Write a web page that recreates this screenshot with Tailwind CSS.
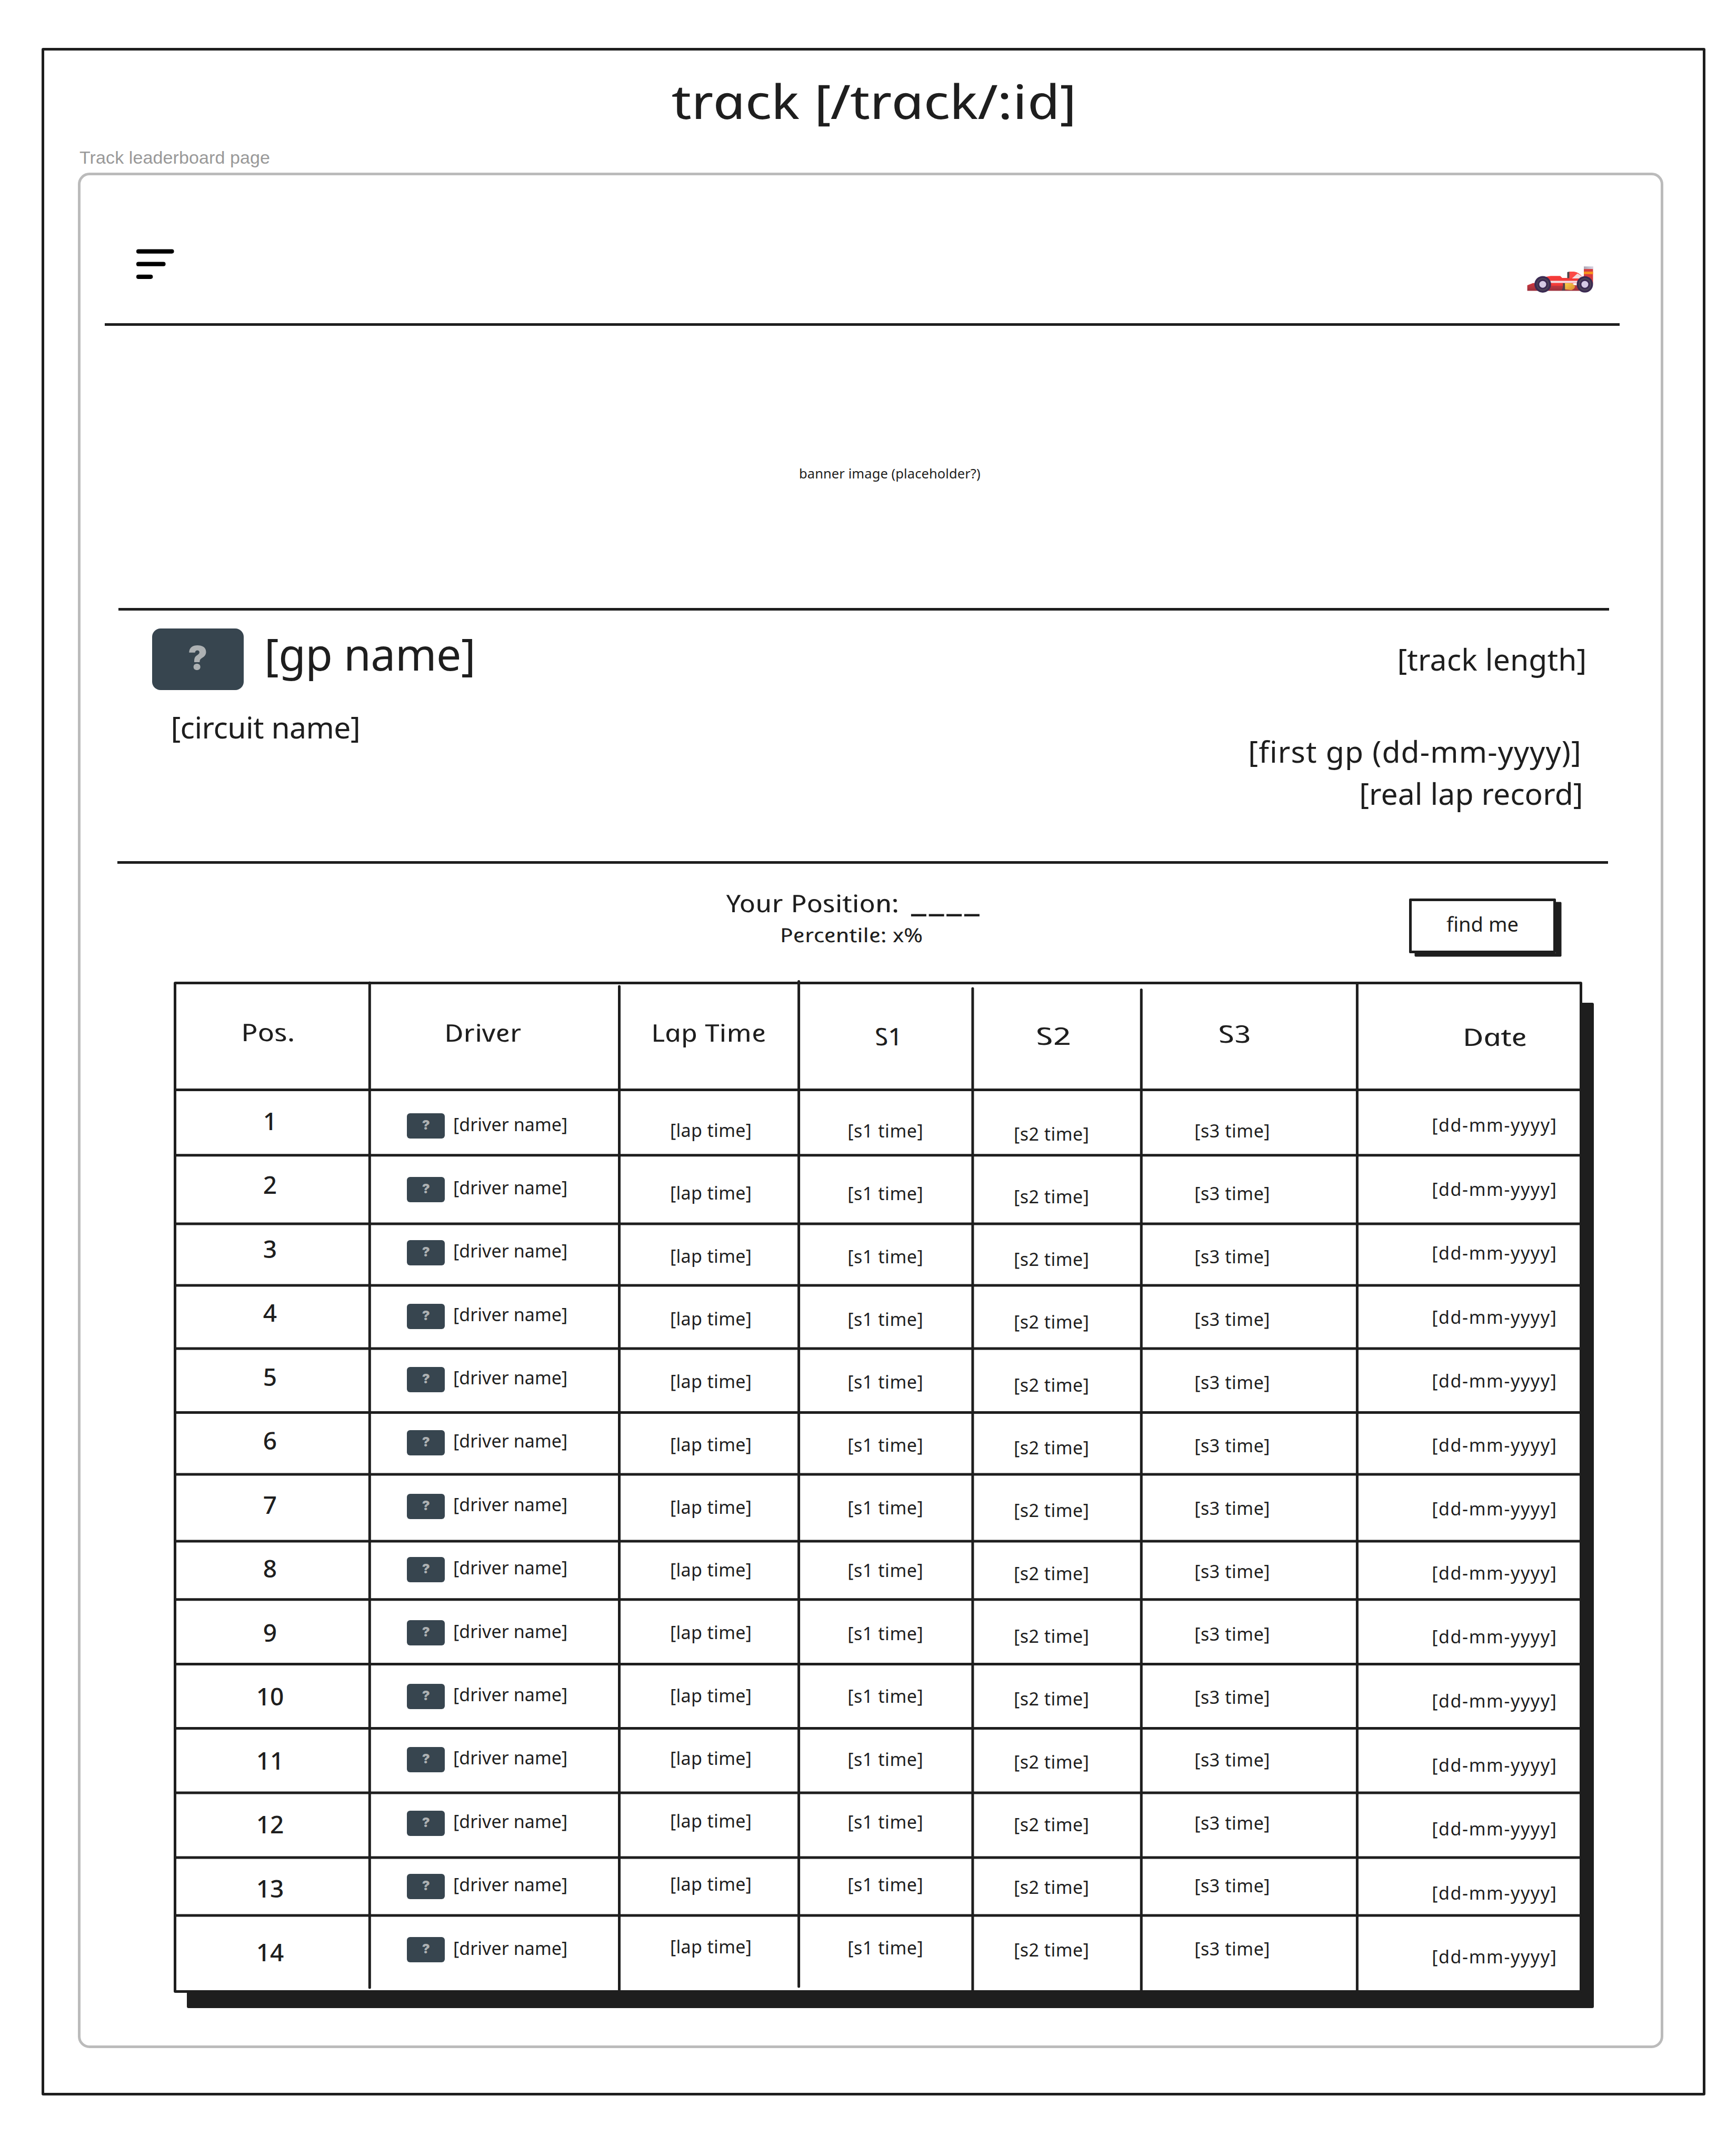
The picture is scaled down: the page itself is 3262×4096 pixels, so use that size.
<!DOCTYPE html>
<html lang="en">
<head>
<meta charset="utf-8">
<title>Track leaderboard page</title>
<script src="https://cdn.jsdelivr.net/npm/@tailwindcss/browser@4"></script>
</head>
<body class="w-[3262px] h-[4096px] overflow-hidden bg-white text-[#1e1e1e] font-['Noto_Sans',sans-serif]">
<div class="flow-root">
<main class="ml-[79px] mt-[91px] w-[3161px] h-[3890px] border-5 border-[#1e1e1e] rounded-[3px] flow-root">

  <h1 data-w="762" data-face="hand" data-size="90" class="mt-[51.7px] ml-[1201px] text-[90px] leading-[86px] whitespace-nowrap italic font-normal skew-x-[12deg] origin-[0_88.75%]">track [/track/:id]</h1>
  <p data-w="361" data-face="label" data-size="34" class="mt-[48.4px] ml-[67px] text-[34px] leading-none whitespace-nowrap text-[#999] font-['Liberation_Sans',sans-serif]">Track leaderboard page</p>

  <section class="mt-[11.9px] ml-[64px] w-[3012px] h-[3563px] border-5 border-[#bbb] rounded-[22px]">

    <!-- Top bar -->
    <header class="ml-[46px] w-[2878px] h-[286.5px] border-b-5 border-[#1e1e1e] flex justify-between items-start pl-[60px] pr-[50px]">
      <svg class="mt-[140px] w-[72px] h-[58px]" viewBox="0 0 72 58" stroke="#000" stroke-width="8.2" stroke-linecap="round"><path d="M4 4.6H67.5M4 28.7H51.5M4 52.8H27.3"/></svg>
      <svg class="mt-[173px] w-[126px] h-[51.5px]" viewBox="0 0 463 188">
        <defs>
          <linearGradient id="nose" x1="0" y1="0" x2="0" y2="1"><stop offset="0" stop-color="#d13a40"/><stop offset="1" stop-color="#9b2f3c"/></linearGradient>
          <linearGradient id="gold" x1="0" y1="0" x2="1" y2="1"><stop offset="0" stop-color="#f9d34a"/><stop offset="1" stop-color="#d9852f"/></linearGradient>
          <linearGradient id="wing" x1="0" y1="0" x2="1" y2="0"><stop offset="0" stop-color="#aca6b4"/><stop offset="1" stop-color="#d8d2e2"/></linearGradient>
        </defs>
        <path d="M397 0H463V18H397Z" fill="url(#wing)"/>
        <path d="M397 18H461V120H397Z" fill="#d63c3f"/>
        <path d="M397 36H461V54H397Z" fill="#f7931e"/>
        <path d="M2 170V132L42 116H150L380 134V170Z" fill="url(#nose)"/>
        <path d="M100 78L165 66H232L246 80H400V117H330L250 134H130Z" fill="#f43b39"/>
        <path d="M160 100H360V115H160Z" fill="#f3dfe3"/>
        <path d="M281 40L297 36V82H281Z" fill="#4b4448"/>
        <path d="M296 36H328Q362 40 386 72L372 84H296Z" fill="#fb4a47"/>
        <path d="M352 50Q370 56 388 74L370 84H314Z" fill="#f3dcdf"/>
        <path d="M250 117H266V168H242Q256 140 250 117Z" fill="#51414c"/>
        <path d="M265 117H312Q326 124 336 140Q332 158 310 166L266 160Z" fill="url(#gold)"/>
        <circle cx="110" cy="125" r="58" fill="#3b2a52"/><circle cx="110" cy="125" r="40" fill="none" stroke="#4d4658" stroke-width="8"/><circle cx="110" cy="125" r="24" fill="#d4c9e4"/>
        <circle cx="404" cy="125" r="57" fill="#3b2a52"/><circle cx="404" cy="125" r="40" fill="none" stroke="#4d4658" stroke-width="8"/><circle cx="404" cy="125" r="24" fill="#d4c9e4"/>
      </svg>
    </header>

    <!-- Banner -->
    <div class="ml-[72px] w-[2832px] h-[540.5px] border-b-5 border-[#1e1e1e] flow-root">
      <p data-w="342" data-face="body" data-size="25.5" class="mt-[267px] ml-[1295px] text-[25.5px] leading-[26px] whitespace-nowrap">banner image (placeholder?)</p>
    </div>

    <!-- Track details -->
    <div class="ml-[70px] w-[2832px] h-[480.7px] border-b-5 border-[#1e1e1e] flex justify-between items-start pl-[65.6px] pr-[44.4px]">
      <div>
        <div class="mt-[34px] flex items-start gap-[45.4px]">
          <div class="w-[174px] h-[117px] rounded-[16px] bg-[#37454f] flex items-center justify-center pb-[5px]"><span class="text-[62px] leading-none font-black text-[#adb1b3] font-['Inter',sans-serif]">?</span></div>
          <h2 data-w="389" data-face="body" data-size="84" class="mt-[5px] h-[84.2px] text-[84px] leading-[86px] whitespace-nowrap">[gp name]</h2>
        </div>
        <p data-w="352.5" data-face="body" data-size="57" class="mt-[41.4px] ml-[39.8px] text-[57px] leading-[58px] whitespace-nowrap">[circuit name]</p>
      </div>
      <div class="flex flex-col items-end">
        <p data-w="352.2" data-face="body" data-size="57" class="mt-[62.6px] text-[57px] leading-[58px] whitespace-nowrap">[track length]</p>
        <p data-w="624.8" data-face="body" data-size="57" class="mt-[117.9px] mr-[10.6px] text-[57px] leading-[58px] whitespace-nowrap">[first gp (dd-mm-yyyy)]</p>
        <p data-w="417.6" data-face="body" data-size="57" class="mt-[21.4px] mr-[6.8px] text-[57px] leading-[58px] whitespace-nowrap">[real lap record]</p>
      </div>
    </div>

    <!-- Own position -->
    <div class="h-[224px] pl-[1230.5px] flex items-start gap-[815.6px]">
      <div class="w-[477.5px] pt-[51.3px]">
        <div class="flex gap-[23.4px]">
          <p data-w="325" data-face="hand" data-size="46" class="text-[46px] leading-none whitespace-nowrap italic font-normal skew-x-[12deg] origin-[0_88.75%]">Your Position:</p>
          <p data-w="131" data-face="rule" data-size="68" class="text-[68px] leading-none h-[46px] -mt-[22px] whitespace-nowrap font-semibold">____</p>
        </div>
        <p data-w="268.5" data-face="hand" data-size="37" class="mt-[19.2px] ml-[101.5px] text-[37px] leading-none whitespace-nowrap italic font-normal skew-x-[12deg] origin-[0_88.75%]">Percentile: x%</p>
      </div>
      <button class="mt-[66.4px] w-[279.5px] h-[103.5px] border-[5.5px] border-[#1e1e1e] rounded-[2px] shadow-[10.5px_6.5px_0_#1e1e1e] flex items-start pl-[66.4px] pt-[23.5px]">
        <span data-w="135.6" data-face="upright" data-size="38" class="block text-left text-[38px] leading-none whitespace-nowrap font-normal">find me</span>
      </button>
    </div>

    <!-- Leaderboard -->
    <div class="relative isolate ml-[176.5px] w-[2676px] h-[1921px]">
      <div class="absolute -z-10 left-[25.5px] top-[40px] w-[2672.7px] h-[1910px] rounded-[3px] bg-[#1e1e1e]"></div>
      <div class="h-full border-5 border-[#1e1e1e] rounded-[3px] bg-white grid grid-cols-[367.3px_474.2px_341.1px_330.3px_320.4px_410.1px_1fr]">
        <div class="pl-[127px] pt-[67px]">
          <h3 data-w="99" data-face="hand" data-size="46" class="text-[46px] leading-none whitespace-nowrap italic font-normal skew-x-[12deg] origin-[0_88.75%]">Pos.</h3>
          <ol data-rows class="mt-[123.2px] ml-[1.5px] w-[100px] flex flex-col gap-[75.5px] text-center">
            <li class="text-[46px] leading-none font-medium">1</li>
          </ol>
        </div>
        <div class="pl-[71.2px] pt-[68.4px]">
          <h3 data-w="143.5" data-face="hand" data-size="46" class="ml-[75px] text-[46px] leading-none whitespace-nowrap italic font-normal skew-x-[12deg] origin-[0_88.75%]">Driver</h3>
          <ul data-rows class="mt-[131.3px] flex flex-col gap-[72.4px]">
            <li class="h-[48px] flex items-start gap-[17.7px]">
              <div class="w-[72.3px] h-[48px] rounded-[6px] bg-[#37454f] flex items-center justify-center pb-[3px]"><span class="text-[25px] leading-none font-black text-[#adb1b3] font-['Inter',sans-serif]">?</span></div>
              <span data-w="213" data-face="body" data-size="34" class="block mt-[3.2px] text-[34px] leading-none whitespace-nowrap">[driver name]</span>
            </li>
          </ul>
        </div>
        <div class="pl-[64.5px] pt-[68.2px]">
          <h3 data-w="215" data-face="hand" data-size="46" class="ml-[1px] text-[46px] leading-none whitespace-nowrap italic font-normal skew-x-[12deg] origin-[0_88.75%]">Lap Time</h3>
          <ul data-rows class="mt-[146.2px] ml-[34.4px] flex flex-col gap-[85.3px]">
            <li data-w="151" data-face="body" data-size="34" class="text-[34px] leading-none whitespace-nowrap">[lap time]</li>
          </ul>
        </div>
        <div class="pl-[95.2px] pt-[75px]">
          <h3 data-w="49" data-face="hand" data-size="46" class="ml-[53.7px] text-[46px] leading-none whitespace-nowrap italic font-normal skew-x-[12deg] origin-[0_88.75%]">S1</h3>
          <ul data-rows class="mt-[140.1px] flex flex-col gap-[85.4px]">
            <li data-w="139.2" data-face="body" data-size="34" class="text-[34px] leading-none whitespace-nowrap">[s1 time]</li>
          </ul>
        </div>
        <div class="pl-[80.7px] pt-[74.2px]">
          <h3 data-w="63" data-face="hand" data-size="46" class="ml-[45px] text-[46px] leading-none whitespace-nowrap italic font-normal skew-x-[12deg] origin-[0_88.75%]">S2</h3>
          <ul data-rows class="mt-[146.7px] flex flex-col gap-[85.3px]">
            <li data-w="138.6" data-face="body" data-size="34" class="text-[34px] leading-none whitespace-nowrap">[s2 time]</li>
          </ul>
        </div>
        <div class="pl-[103.4px] pt-[70.2px]">
          <h3 data-w="59" data-face="hand" data-size="46" class="ml-[48px] text-[46px] leading-none whitespace-nowrap italic font-normal skew-x-[12deg] origin-[0_88.75%]">S3</h3>
          <ul data-rows class="mt-[144.9px] flex flex-col gap-[85.57px]">
            <li data-w="139.2" data-face="body" data-size="34" class="text-[34px] leading-none whitespace-nowrap">[s3 time]</li>
          </ul>
        </div>
        <div class="pl-[144.4px] pt-[76.4px]">
          <h3 data-w="119" data-face="hand" data-size="46" class="ml-[60.6px] text-[46px] leading-none whitespace-nowrap italic font-normal skew-x-[12deg] origin-[0_88.75%]">Date</h3>
          <ul data-rows class="mt-[127.9px] flex flex-col gap-[87.57px]">
            <li data-w="232.5" data-face="body" data-size="34" class="text-[34px] leading-none whitespace-nowrap">[dd-mm-yyyy]</li>
          </ul>
        </div>
      </div>
      <!-- Hand-placed rules of the table -->
      <svg class="absolute inset-0 w-full h-full overflow-visible" viewBox="329.5 1865 2676 1921" fill="none" stroke="#1e1e1e" stroke-width="5" stroke-linecap="round">
        <path d="M701.8 1867V3776M1176 1874V3780M1517.1 1864.5V3774M1847.4 1878V3782M2167.8 1880.5V3782M2577.9 1868V3782"/>
        <path d="M332 2070.6H3002M332 2194.7H3000M332 2324.9H3002M332 2442H3002M332 2562H3002M334 2683.5H3002M332 2801H3002M332 2928H3002M332 3038.7H3002M332 3161.5H3002M332 3283.5H3002M332 3406H3002M332 3529.1H3002M332 3639.1H3002"/>
      </svg>
    </div>
  </section>
</main>
</div>

<script>
  // Repeat the first entry of every column for the 14 leaderboard places.
  document.querySelectorAll('[data-rows]').forEach(function (list) {
    var first = list.firstElementChild;
    for (var i = 2; i <= 14; i++) {
      var row = first.cloneNode(true);
      if (list.tagName === 'OL') row.textContent = i;
      list.appendChild(row);
    }
  });
  // Fit each label so that its ink spans data-w pixels: headings are
  // widened, everything else is tracked out or in.
  var faces = {
    hand: ['italic 400', '"Noto Sans"'],
    upright: ['400', '"Noto Sans"'],
    rule: ['600', '"Noto Sans"'],
    label: ['400', '"Liberation Sans"'],
    body: ['400', '"Noto Sans"']
  };
  var ctx = document.createElement('canvas').getContext('2d');
  document.querySelectorAll('[data-w]').forEach(function (el) {
    var face = faces[el.dataset.face], w = parseFloat(el.dataset.w), size = parseFloat(el.dataset.size);
    var text = el.textContent;
    ctx.font = face[0] + ' ' + size + 'px ' + face[1] + ', sans-serif';
    var m = ctx.measureText(text);
    el.style.width = w + 'px';
    if (el.dataset.face === 'hand') {
      el.style.textIndent = -0.02 * size + 'px';
      el.style.scale = w / (m.width - 0.06 * size) + ' 1';
    } else {
      el.style.textIndent = m.actualBoundingBoxLeft + 'px';
      el.style.letterSpacing = (w - m.actualBoundingBoxLeft - m.actualBoundingBoxRight) / (text.length - 1) + 'px';
    }
  });
</script>
</body>
</html>
